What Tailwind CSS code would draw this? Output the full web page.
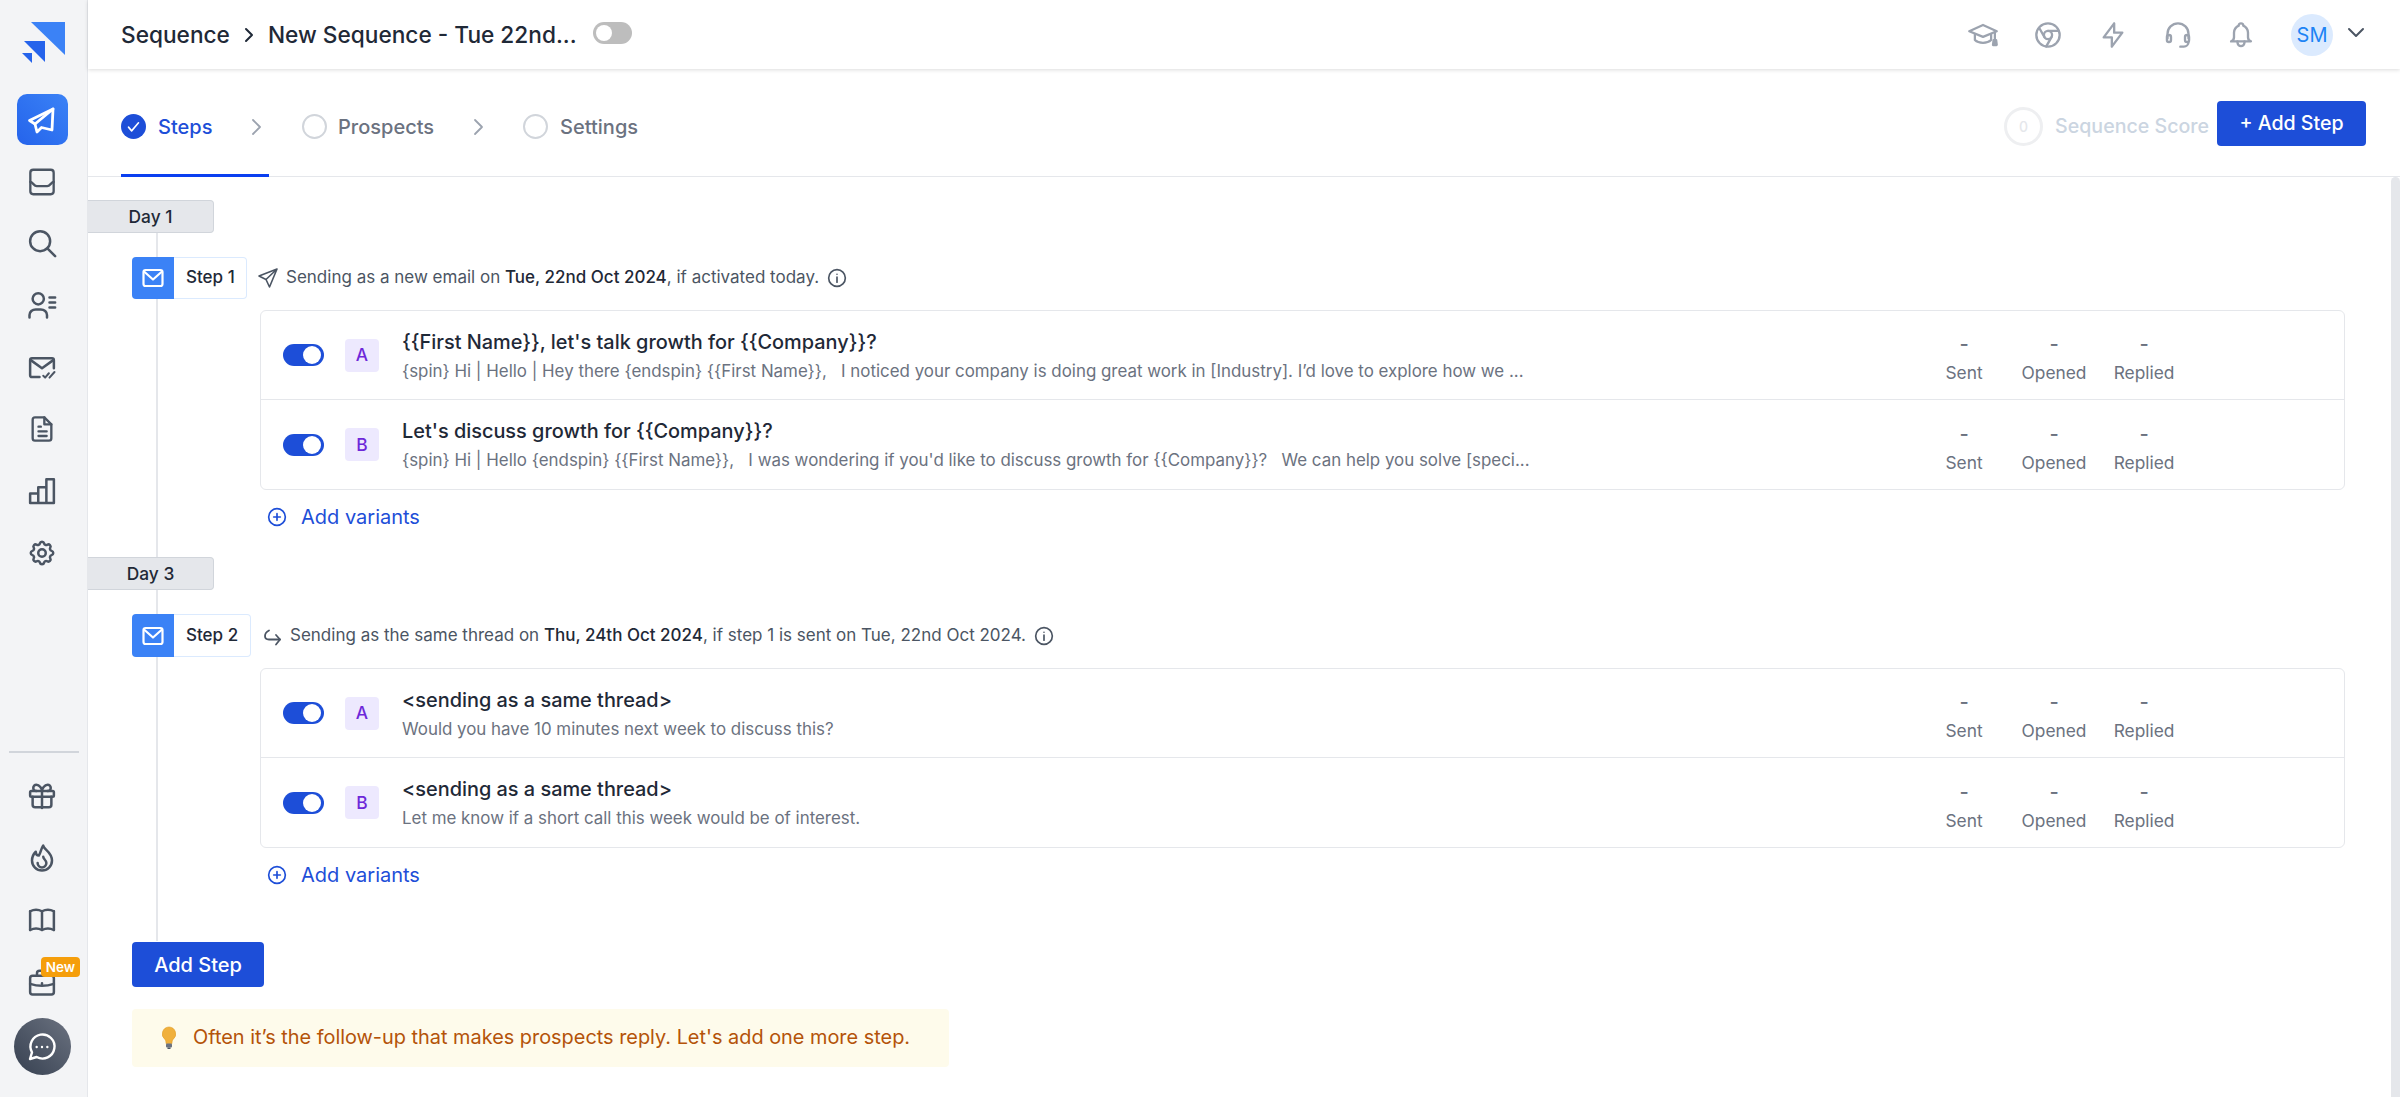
<!DOCTYPE html>
<html lang="en">
<head>
  <meta charset="UTF-8" />
  <title>Sequence</title>
  <script src="https://cdn.jsdelivr.net/npm/@tailwindcss/browser@4"></script>
</head>
<body class="bg-white h-screen overflow-hidden flex font-[family-name:Inter,sans-serif] text-[#1f2937]">

  <!-- sidebar -->
  <aside class="w-[88px] h-full shrink-0 bg-[#f3f4f6] border-r border-[#e5e7eb] pr-[3px] flex flex-col items-center text-[#4b5563]">
    <svg class="mt-[22px] ml-[4px]" width="44" height="42" viewBox="0 0 44 42" fill="#2f74f0"><path d="M9 0H43V33Z" fill="#3b82f6"/><path d="M2 19H23V40Z" fill="#2563eb"/><path d="M0 31H10V41Z" fill="#2563eb"/></svg>
    <div class="mt-[30px] w-[51px] h-[51px] rounded-[10px] bg-gradient-to-tr from-[#2563eb] to-[#3b82f6] flex items-center justify-center">
      <svg width="30" height="30" viewBox="0 0 30 30" fill="none" stroke="#fff" stroke-width="2.800" stroke-linejoin="round" stroke-linecap="round"><path d="M26 4 2.500 15.500 8 19l2 8 4.500-4.500L25 25Z"/><path d="M26 4 8 19"/></svg>
    </div>
    <div class="flex flex-col items-center gap-[32px] mt-[23px]">
      <svg width="28" height="28" viewBox="0 0 24 24" fill="none" stroke="currentColor" stroke-width="2" stroke-linecap="round" stroke-linejoin="round"><rect x="2" y="1.500" width="20" height="21" rx="2.500"/><path d="M2 12c2 0 3 3.500 5.500 3.500h9C19 15.500 20 12 22 12"/></svg>
      <svg width="30" height="30" viewBox="0 0 24 24" fill="none" stroke="currentColor" stroke-width="2" stroke-linecap="round"><circle cx="10.500" cy="10.500" r="8"/><path d="m16.500 16.500 6 6"/></svg>
      <svg width="30" height="30" viewBox="0 0 24 24" fill="none" stroke="currentColor" stroke-width="2" stroke-linecap="round"><circle cx="9" cy="7" r="4.500"/><path d="M2 22v-2a5 4.500 0 0 1 5-4.500h4a5 4.500 0 0 1 5 4.500v2"/><path d="M18 6h4.500M18 10h4.500M18 14h4.500"/></svg>
      <svg width="30" height="30" viewBox="0 0 24 24" fill="none" stroke="currentColor" stroke-width="2" stroke-linecap="round" stroke-linejoin="round"><path d="M10 20H4a1.500 1.500 0 0 1-1.500-1.500v-12A1.500 1.500 0 0 1 4 5h16a1.500 1.500 0 0 1 1.500 1.500V13"/><path d="m3 6.500 9 6.500 9-6.500"/><path stroke-width="1.600" d="m13 19 1.500 1.500 3-3.500M18 20.500l4-4.500"/></svg>
      <svg width="28" height="30" viewBox="0 0 24 24" fill="none" stroke="currentColor" stroke-width="2" stroke-linecap="round" stroke-linejoin="round"><path d="M14 2H6a2 2 0 0 0-2 2v16a2 2 0 0 0 2 2h12a2 2 0 0 0 2-2V8Z"/><path d="M14 2v6h6"/><path d="M9 10h2M9 14h7M9 18h7"/></svg>
      <svg width="30" height="30" viewBox="0 0 24 24" fill="none" stroke="currentColor" stroke-width="2" stroke-linecap="round" stroke-linejoin="round"><path d="M2.500 21.500v-7.500h6.500v7.500ZM9 21.500V9h6.500v12.500ZM15.500 21.500V2.500h6v19Z"/></svg>
      <svg width="30" height="30" viewBox="0 0 24 24" fill="none" stroke="currentColor" stroke-width="2" stroke-linecap="round" stroke-linejoin="round"><path d="M10.325 4.317c.426-1.756 2.924-1.756 3.350 0a1.724 1.724 0 0 0 2.573 1.066c1.543-.940 3.310.826 2.370 2.370a1.724 1.724 0 0 0 1.065 2.572c1.756.426 1.756 2.924 0 3.350a1.724 1.724 0 0 0-1.066 2.573c.940 1.543-.826 3.310-2.370 2.370a1.724 1.724 0 0 0-2.572 1.065c-.426 1.756-2.924 1.756-3.350 0a1.724 1.724 0 0 0-2.573-1.066c-1.543.940-3.310-.826-2.370-2.370a1.724 1.724 0 0 0-1.065-2.572c-1.756-.426-1.756-2.924 0-3.350a1.724 1.724 0 0 0 1.066-2.573c-.940-1.543.826-3.310 2.370-2.370c1 .608 2.296.070 2.572-1.065z"/><circle cx="12" cy="12" r="3"/></svg>
    </div>

    <div class="mt-auto ml-[3px] w-[70px] h-[2px] bg-[#d1d5db]"></div>
    <div class="flex flex-col items-center gap-[32px] mt-[28px]">
      <svg width="30" height="30" viewBox="0 0 24 24" fill="none" stroke="currentColor" stroke-width="2" stroke-linecap="round" stroke-linejoin="round"><rect x="2.500" y="8" width="19" height="4.500" rx="1"/><path d="M12 8v13.500"/><path d="M19.500 12.500V19a2 2 0 0 1-2 2h-11a2 2 0 0 1-2-2v-6.500"/><path d="M7.500 8a2.500 2.500 0 0 1 0-5c2.500 0 4.500 3 4.500 5 0-2 2-5 4.500-5a2.500 2.500 0 0 1 0 5"/></svg>
      <svg width="30" height="30" viewBox="0 0 24 24" fill="none" stroke="currentColor" stroke-width="2" stroke-linecap="round" stroke-linejoin="round"><path d="M13 2c0 3 7 5 7 12a8 8 0 0 1-16 0c0-3 1-5 3-7 0 2 1 3 2.500 3C11 8 11 5 13 2Z"/><path d="M13 11c0 2 2.500 2.500 2.500 5a3.500 3.500 0 0 1-7 0"/></svg>
      <svg width="30" height="30" viewBox="0 0 24 24" fill="none" stroke="currentColor" stroke-width="2" stroke-linecap="round" stroke-linejoin="round"><path d="M2.500 20a10 10 0 0 1 9.500 0 10 10 0 0 1 9.500 0"/><path d="M2.500 5a10 10 0 0 1 9.500 0 10 10 0 0 1 9.500 0"/><path d="M2.500 5v15M12 5v15M21.500 5v15"/></svg>
      <div class="relative w-[30px] h-[30px]">
        <svg width="30" height="30" viewBox="0 0 24 24" fill="none" stroke="currentColor" stroke-width="2" stroke-linecap="round" stroke-linejoin="round"><rect x="2.500" y="7" width="19" height="15" rx="2"/><path d="M8 7V5a2 2 0 0 1 2-2h4a2 2 0 0 1 2 2v2"/><path d="M2.500 13.500c6 2 13 2 19 0"/><path d="M12 13v.500"/></svg>
        <span class="absolute left-[14px] top-[-10px] w-[39px] h-[20px] rounded-[4px] bg-[#f59e0b] text-white text-[13.500px] font-semibold leading-[20px] text-center">New</span>
      </div>
    </div>
    <div class="mt-[21px] mb-[22px] w-[57px] h-[57px] rounded-full bg-gradient-to-tr from-[#374151] to-[#6b7280] flex items-center justify-center">
      <svg width="32" height="32" viewBox="0 0 24 24" fill="none" stroke="#fff" stroke-width="1.800" stroke-linecap="round" stroke-linejoin="round"><path d="M3 21l1.500-5A9 9 0 1 1 8 19.500Z"/><path d="M8 12h.01M12 12h.01M16 12h.01"/></svg>
    </div>
  </aside>

  <div class="flex-1 min-w-0 flex flex-col relative">
    <!-- top bar -->
    <header class="h-[69px] shrink-0 flex items-center pl-[33px] pr-[34px] shadow-[0_1px_4px_rgba(0,0,0,0.14)] relative z-10 bg-white">
      <span class="text-[22.670px] font-medium">Sequence</span>
      <svg class="mx-[11px] text-[#1f2937]" width="16" height="22" viewBox="0 0 16 22" fill="none" stroke="currentColor" stroke-width="2" stroke-linecap="round" stroke-linejoin="round"><path d="m5 5 6 6-6 6"/></svg>
      <span class="text-[22.670px] font-medium">New Sequence - Tue 22nd...</span>
      <span class="ml-[16px] mb-[4px] w-[39px] h-[22px] rounded-full bg-[#bdbdbd] flex items-center pl-[3px]"><span class="w-[16px] h-[16px] rounded-full bg-white"></span></span>

      <div class="ml-auto flex items-center text-[#9ca3af]">
        <svg width="34" height="30" viewBox="0 0 26 24" fill="none" stroke="currentColor" stroke-width="1.800" stroke-linecap="round" stroke-linejoin="round"><path d="M13 4 2 9l11 4.500L24 9Z"/><path d="M6.500 11.500V16c3 3 10 3 13 0v-4.500"/><path d="M22.500 10v6"/><path d="M21.500 16h2l.5 4h-3Z" fill="currentColor"/></svg>
        <svg class="ml-[34px]" width="28" height="28" viewBox="0 0 24 24" fill="none" stroke="currentColor" stroke-width="2" stroke-linecap="round"><circle cx="12" cy="12" r="10"/><circle cx="12" cy="12" r="3.500"/><path d="M12 8.500h9M15 13.800l-4.500 8M9 13.800 4.500 6"/></svg>
        <svg class="ml-[37px]" width="28" height="30" viewBox="0 0 24 24" fill="none" stroke="currentColor" stroke-width="2" stroke-linecap="round" stroke-linejoin="round"><path d="M13 2v8h7L11 22v-8H4Z"/></svg>
        <svg class="ml-[37px]" width="28" height="30" viewBox="0 0 24 24" fill="none" stroke="currentColor" stroke-width="2" stroke-linecap="round" stroke-linejoin="round"><path d="M3 15v-4a9 9 0 0 1 18 0v4"/><rect x="2.500" y="12" width="3.500" height="6" rx="1.750"/><rect x="18" y="12" width="3.500" height="6" rx="1.750"/><path d="M21 18a4 4 0 0 1-4 4h-3"/></svg>
        <svg class="ml-[35px]" width="28" height="30" viewBox="0 0 24 24" fill="none" stroke="currentColor" stroke-width="2" stroke-linecap="round" stroke-linejoin="round"><path d="M10 4a2 2 0 1 1 4 0 7 7 0 0 1 4 6v4a4 4 0 0 0 2.500 3.500h-17A4 4 0 0 0 6 14v-4a7 7 0 0 1 4-6"/><path d="M9 17.500v1a3 3 0 0 0 6 0v-1"/></svg>
        <span class="ml-[36px] w-[42px] h-[42px] rounded-full bg-[#dbeafe] text-[#1d84f5] text-[20px] flex items-center justify-center">SM</span>
        <svg class="ml-[13px] mb-[4px] text-[#4b5563]" width="20" height="14" viewBox="0 0 20 14" fill="none" stroke="currentColor" stroke-width="2" stroke-linecap="round" stroke-linejoin="round"><path d="m3 3 7 7 7-7"/></svg>
      </div>
    </header>

    <!-- tabs -->
    <div class="h-[108px] shrink-0 flex items-stretch pl-[33px] pr-[34px] border-b border-[#e5e7eb]">
      <div class="w-[148px] flex items-center pt-[10px] border-b-[3px] border-[#0a3ff0] mb-[-1px]">
        <span class="w-[25px] h-[25px] rounded-full bg-[#1d4ed8] flex items-center justify-center"><svg width="15" height="15" viewBox="0 0 24 24" fill="none" stroke="#fff" stroke-width="2.500" stroke-linecap="round" stroke-linejoin="round"><path d="m4 13 5 6L20 6"/></svg></span>
        <span class="ml-[12px] text-[20px] font-medium text-[#1d4ed8]">Steps</span>
      </div>
      <div class="flex items-center pt-[8px] text-[20px] font-medium text-[#6b7280]">
        <span class="ml-[-19px]"><svg width="14" height="20" viewBox="0 0 14 20" fill="none" stroke="#9ca3af" stroke-width="1.800" stroke-linecap="round" stroke-linejoin="round"><path d="m3 3 7 7-7 7"/></svg></span>
        <span class="ml-[38px] w-[25px] h-[25px] rounded-full border-2 border-[#d1d5db]"></span>
        <span class="ml-[11px]">Prospects</span>
        <span class="ml-[38px]"><svg width="14" height="20" viewBox="0 0 14 20" fill="none" stroke="#9ca3af" stroke-width="1.800" stroke-linecap="round" stroke-linejoin="round"><path d="m3 3 7 7-7 7"/></svg></span>
        <span class="ml-[37px] w-[25px] h-[25px] rounded-full border-2 border-[#d1d5db]"></span>
        <span class="ml-[12px]">Settings</span>
      </div>
      <div class="ml-auto flex items-center pt-[8px]">
        <span class="w-[39px] h-[39px] rounded-full border-[3px] border-[#eeeff1] text-[#e5e7eb] text-[14px] font-medium flex items-center justify-center">0</span>
        <span class="ml-[12px] text-[19.600px] font-medium text-[#cbd5e1]">Sequence Score</span>
        <button class="ml-[8px] mb-[6px] w-[149px] h-[45px] rounded-[4px] bg-[#1d4ed8] text-white text-[19.600px] font-medium">+ Add Step</button>
      </div>
    </div>

    <!-- steps -->
    <main class="flex-1 relative overflow-hidden pt-[23px]">
      <div class="absolute right-0 top-0 bottom-0 w-[9px] bg-[#e5e7eb] rounded-t-[5px]"></div>
      <div class="absolute left-[68px] top-[55px] h-[709px] w-[2px] bg-[#e5e7eb]"></div>
      <div id="days" class="relative"></div>

      <button class="relative ml-[44px] mt-[56px] block w-[132px] h-[45px] rounded-[4px] bg-[#1d4ed8] text-white text-[20px] font-medium">Add Step</button>
      <div class="ml-[44px] mt-[22px] w-[817px] h-[58px] rounded-[4px] bg-[#fefbeb] flex items-center text-[19.900px] text-[#b45309]">
        <svg class="ml-[27px]" width="20" height="24" viewBox="0 0 20 24"><path d="M10 1a7 7 0 0 0-4 12.500c.8.800 1 2.500 1 4h6c0-1.500.2-3.200 1-4A7 7 0 0 0 10 1Z" fill="#f0b03c" stroke="#e09a20" stroke-width=".6"/><rect x="7" y="17.500" width="6" height="4" rx="1" fill="#6b7280"/><rect x="8.500" y="21.500" width="3" height="1.500" fill="#4b5563"/></svg>
        <span class="ml-[14px]">Often it’s the follow-up that makes prospects reply. Let's add one more step.</span>
      </div>
    </main>
  </div>

  <script>
    const sendIcon = `<svg width="24" height="24" viewBox="0 0 24 24" fill="none" stroke="#4b5563" stroke-width="1.600" stroke-linecap="round" stroke-linejoin="round"><path d="M21 3 3 10l7 3.500 3.500 7.500ZM21 3 10 13.500"/></svg>`;
    const replyIcon = `<svg width="24" height="24" viewBox="0 0 24 24" fill="none" stroke="#4b5563" stroke-width="1.800" stroke-linecap="round" stroke-linejoin="round"><path d="M8 6.500C5 8 4 10 4 12c0 2.500 2 3.500 4 3.500h11"/><path d="m15 11 4 4.500-4 5"/></svg>`;
    const infoIcon = `<svg class="ml-[8px]" width="20" height="20" viewBox="0 0 24 24" fill="none" stroke="#4b5563" stroke-width="2" stroke-linecap="round"><circle cx="12" cy="12" r="10"/><path d="M12 11v6M12 7.500v.01"/></svg>`;

    const days = [
      {
        day: 'Day 1', step: 'Step 1', chipWidth: 'w-[73px]', icon: sendIcon, iconClass: 'ml-[9px] mr-[6px]', gap: '', chipHeight: 'h-[42px]',
        line: 'Sending as a new email on <b class="font-medium text-[#1f2937]">Tue, 22nd Oct 2024</b>, if activated today.',
        rows: [
          ["A", "{{First Name}}, let's talk growth for {{Company}}?", "{spin} Hi | Hello | Hey there {endspin} {{First Name}},   I noticed your company is doing great work in [Industry]. I’d love to explore how we ..."],
          ["B", "Let's discuss growth for {{Company}}?", "{spin} Hi | Hello {endspin} {{First Name}},   I was wondering if you'd like to discuss growth for {{Company}}?   We can help you solve [speci..."],
        ],
      },
      {
        day: 'Day 3', step: 'Step 2', chipWidth: 'w-[77px]', icon: replyIcon, iconClass: 'ml-[10px] mr-[5px]', gap: 'mt-[29px]', chipHeight: 'h-[43px]',
        line: 'Sending as the same thread on <b class="font-medium text-[#1f2937]">Thu, 24th Oct 2024</b>, if step 1 is sent on Tue, 22nd Oct 2024.',
        rows: [
          ["A", "&lt;sending as a same thread&gt;", "Would you have 10 minutes next week to discuss this?"],
          ["B", "&lt;sending as a same thread&gt;", "Let me know if a short call this week would be of interest."],
        ],
      },
    ];

    const stat = label => `
      <div class="w-[90px] mt-[6px] flex flex-col items-center">
        <span class="text-[20px] leading-[30px] font-medium text-[#6b7280]">-</span>
        <span class="text-[17.330px] leading-[28px] text-[#6b7280]">${label}</span>
      </div>`;

    document.getElementById('days').innerHTML = days.map(d => `
      <section class="${d.gap}">
        <div class="w-[126px] h-[33px] rounded-r-[4px] bg-[#e5e7eb] border border-l-0 border-[#d1d5db] text-[17.330px] font-medium flex items-center justify-center">${d.day}</div>
        <div class="mt-[24px] ml-[44px] flex items-center ${d.chipHeight}">
          <span class="w-[42px] h-full bg-[#3b82f6] rounded-l-[4px] flex items-center justify-center">
            <svg width="24" height="24" viewBox="0 0 24 24" fill="none" stroke="#fff" stroke-width="2.200" stroke-linecap="round" stroke-linejoin="round"><rect x="2.500" y="4" width="19" height="16" rx="2"/><path d="m3 5.500 9 8 9-8"/></svg>
          </span>
          <span class="${d.chipWidth} h-full bg-white border border-l-0 border-[#dbeafe] rounded-r-[4px] text-[17px] font-medium flex items-center pl-[12px]">${d.step}</span>
          <span class="${d.iconClass}">${d.icon}</span>
          <span class="text-[17px] text-[#4b5563]">${d.line}</span>
          ${infoIcon}
        </div>
        <div class="mt-[11px] ml-[172px] w-[2085px] border border-[#e5e7eb] rounded-[6px] bg-white divide-y divide-[#e5e7eb]">
          ${d.rows.map(r => `
            <div class="h-[89px] flex items-center">
              <span class="ml-[22px] shrink-0 w-[41px] h-[22px] rounded-full bg-[#1d4ed8] flex items-center justify-end pr-[3px]"><span class="w-[18px] h-[18px] rounded-full bg-white"></span></span>
              <span class="ml-[21px] shrink-0 w-[34px] h-[33px] rounded-[4px] bg-[#ede9fe] text-[#6d28d9] text-[17.330px] font-medium flex items-center justify-center">${r[0]}</span>
              <div class="ml-[23px] flex-1 min-w-0 pt-[2px]">
                <div class="text-[19.900px] leading-[29px] font-medium text-[#1f2937]">${r[1]}</div>
                <div class="text-[16.900px] leading-[28px] text-[#6b7280] whitespace-pre">${r[2]}</div>
              </div>
              <div class="mr-[155px] flex">${stat('Sent')}${stat('Opened')}${stat('Replied')}</div>
            </div>`).join('')}
        </div>
        <div class="mt-[16px] ml-[179px] flex items-center h-[22px] text-[20px] text-[#1d4ed8]">
          <svg width="20" height="20" viewBox="0 0 24 24" fill="none" stroke="currentColor" stroke-width="2" stroke-linecap="round"><circle cx="12" cy="12" r="10"/><path d="M12 8v8M8 12h8"/></svg>
          <span class="ml-[14px]">Add variants</span>
        </div>
      </section>`).join('');
  </script>
</body>
</html>
